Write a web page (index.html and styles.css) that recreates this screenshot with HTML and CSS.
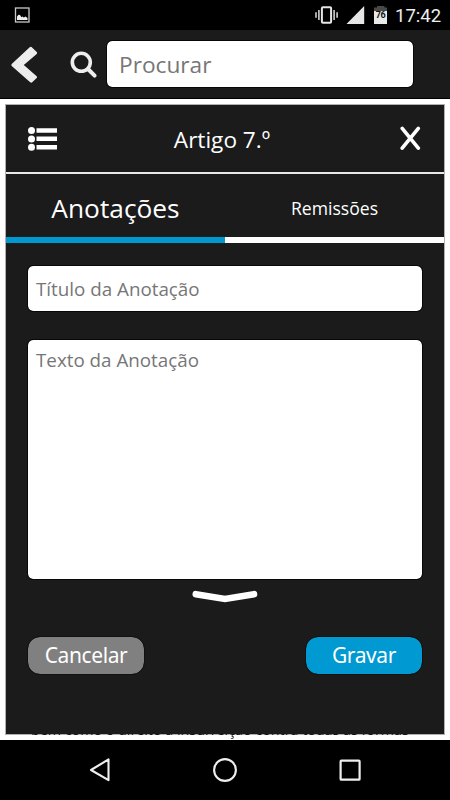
FILE: index.html
```html
<!DOCTYPE html>
<html lang="pt">
<head>
<meta charset="utf-8">
<title>Anotações</title>
<link rel="stylesheet" href="styles.css">
</head>
<body>
<div class="status">
  <svg class="picture" width="16" height="16" viewBox="0 0 16 16"><rect x="1.500" y="1" width="13.500" height="14" fill="none" stroke="#c8c8c8" stroke-width="1.300"/><path d="M3 13V9.500l1.500-1.700L6 8l1.500 2.200 1-.7 1.300 1 1.700-1 2 1.500v2z" fill="#eee"/></svg>
  <svg class="indicators" width="75" height="20" viewBox="0 0 75 20"><rect x="6.900" y="2.200" width="9.200" height="15.500" rx="1" fill="none" stroke="#e6e6e6" stroke-width="2"/><path d="M1 7.200v5.600M3.900 5v10M19.100 5v10M22.100 7.200v5.600" stroke="#ddd" stroke-width="1.500"/><path d="M49.200 1v17.900H31.500z" fill="#e6e6e6"/><path d="M59 6V2.500h3V1h7.500v1.500H72V6z" fill="#484848"/><path d="M59 6h13v13H59z" fill="#e9e9e9"/><text x="65.500" y="13.300" text-anchor="middle" class="level">76</text></svg>
  <span class="time">17:42</span>
</div>
<header class="topbar">
  <svg class="back" width="27" height="38" viewBox="0 0 27 38"><path d="M20.500 1 26 6.200Q26.500 7 25.700 8L12.800 19 25.700 30.200Q26.500 31.200 25.700 32L21.200 36.300Q20.300 37 19.200 36.200L.7 20Q0 19 .7 18L18.700 1.300Q19.600.5 20.500 1z" fill="#ededed"/></svg>
  <svg class="search" width="28" height="28" viewBox="0 0 28 28"><circle cx="11.300" cy="11.300" r="9" fill="none" stroke="#eee" stroke-width="3.600"/><path d="M18 18l6.600 6.600" stroke="#eee" stroke-width="4" stroke-linecap="round"/></svg>
  <div class="field query"><span>Procurar</span></div>
</header>
<main class="page">
  <section class="panel">
    <div class="heading">
      <svg width="30" height="24" viewBox="0 0 30 24" fill="#fff"><circle cx="3.500" cy="3.600" r="3.500"/><circle cx="3.500" cy="12" r="3.500"/><circle cx="3.500" cy="20.200" r="3.500"/><path d="M8.500 1.200H29v4.600H8.500zM8.500 9.600H29v4.500H8.500zM8.500 18H29v4.500H8.500z"/></svg>
      <h1>Artigo 7.º</h1>
      <svg width="21" height="25" viewBox="0 0 21 25"><path d="M2.200 2.300 18.300 22.200M18.300 2.300 2.200 22.200" stroke="#fff" stroke-width="3.600" stroke-linecap="round"/></svg>
    </div>
    <nav class="tabs">
      <div class="tab active"><span>Anotações</span></div>
      <div class="tab"><span>Remissões</span></div>
    </nav>
    <div class="form">
      <div class="field title"><span>Título da Anotação</span></div>
      <div class="field body"><span>Texto da Anotação</span></div>
      <svg class="expand" width="66" height="14" viewBox="0 0 66 14"><path d="M3.800 4.200 33 9 62 4.200" fill="none" stroke="#fff" stroke-width="6.600" stroke-linecap="round"/></svg>
      <div class="actions">
        <div class="button"><span>Cancelar</span></div>
        <div class="button save"><span>Gravar</span></div>
      </div>
    </div>
  </section>
  <div class="article"><p>bem como o direito à insurreição contra todas as formas</p></div>
</main>
<footer class="navbar">
  <svg width="22" height="26" viewBox="0 0 22 26"><path d="M19.500 2.400v20.800L2 13z" fill="none" stroke="#eee" stroke-width="2.100" stroke-linejoin="round"/></svg>
  <svg width="26" height="26" viewBox="0 0 26 26"><circle cx="13" cy="13" r="10.900" fill="none" stroke="#eee" stroke-width="2.100"/></svg>
  <svg width="22" height="26" viewBox="0 0 22 26"><rect x="1.600" y="3.700" width="19" height="19" rx=".8" fill="none" stroke="#eee" stroke-width="2.200"/></svg>
</footer>
</body>
</html>
```
FILE: styles.css
```css
* { box-sizing: border-box; }
body { margin: 0; width: 450px; height: 800px; overflow: hidden; background: #fff; color: #fff; font-family: "Open Sans", "Noto Sans", sans-serif; }
svg { display: block; flex: none; }
span, h1 { white-space: nowrap; }
.status { display: flex; align-items: flex-start; height: 30px; background: #000; }
.picture { margin: 7px 0 0 14px; }
.indicators { margin: 5px 0 0 285px; }
.level { font: bold 9px Roboto, sans-serif; letter-spacing: -.3px; fill: #111; }
.time { margin: 5px 0 0 5px; font: 400 18.5px/23px Roboto, sans-serif; color: #eee; }
.topbar { display: flex; align-items: flex-start; height: 69px; background: #1b1b1b; border-bottom: 1px solid #000; }
.back { margin: 16px 0 0 11px; }
.search { margin: 21px 0 0 32px; }
.field { background: #fff; border-radius: 5px; color: #767676; outline: 1px solid #080808; }
.query { width: 306px; height: 46px; margin: 11px 0 0 9px; padding-left: 12px; font-size: 22.7px; line-height: 48px; }
.page { height: 641px; padding: 6px 6px 0; }
.panel { height: 629px; width: 438px; background: #1b1b1b; box-shadow: 0 0 0 1px #b0b0b0; }
.heading { display: flex; align-items: center; justify-content: space-between; height: 67px; padding: 0 23px 0 22px; }
.heading h1 { margin: 1px 14px 0 0; font-size: 22.6px; font-weight: 400; }
.tabs { display: flex; height: 71px; border-top: 2px solid #e8e8e8; }
.tab { display: flex; align-items: center; justify-content: center; width: 219px; padding-top: 5px; border-bottom: 6px solid #fff; font-size: 17.6px; }
.active { border-color: #0099d1; font-size: 26.3px; }
.form { padding: 23px 22px 0; font-size: 18.8px; }
.title { height: 45px; padding-left: 8px; line-height: 46px; }
.body { height: 239px; margin-top: 29px; padding: 7px 8px; line-height: 27px; }
.expand { margin: 11px 0 0 164px; }
.actions { display: flex; justify-content: space-between; margin-top: 33px; }
.button { width: 116px; height: 37px; border-radius: 12px; background: #808080; outline: 1px solid #111; text-align: center; font: 21px/37px "Noto Sans", sans-serif; letter-spacing: -.4px; }
.save { background: #0099d1; }
.article { height: 6px; overflow: hidden; padding-left: 25px; color: #111; font-size: 14.3px; line-height: 20px; }
.article p { margin: -14px 0 0; white-space: nowrap; }
.navbar { display: flex; align-items: center; justify-content: space-between; height: 60px; padding: 0 89px; background: #000; }
```
